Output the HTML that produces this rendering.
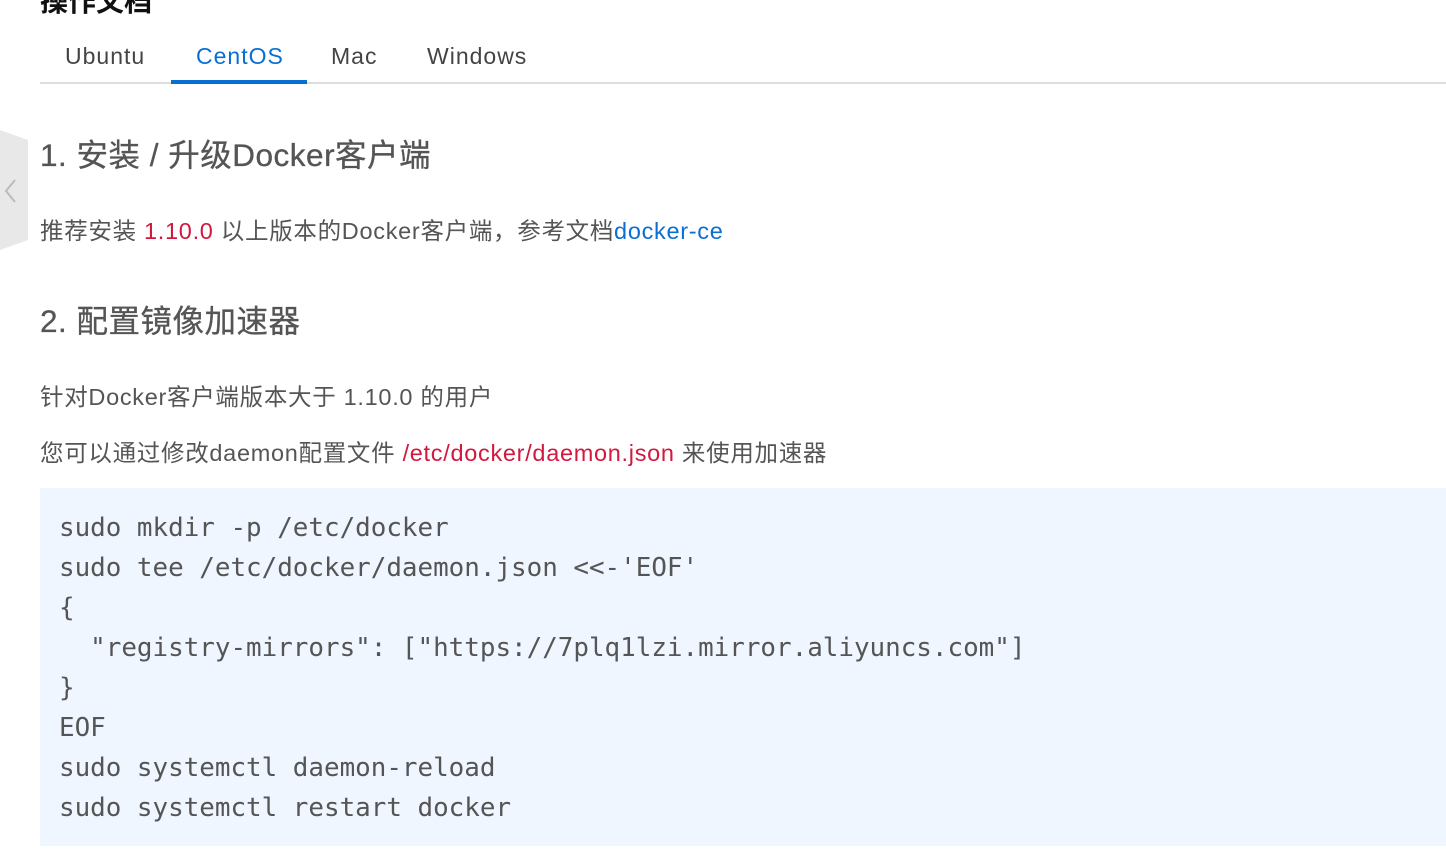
<!DOCTYPE html><html><head><meta charset="utf-8"><style>
body{margin:0;width:1446px;height:864px;overflow:hidden;background:#fff;font-family:"Liberation Sans","Noto Sans CJK SC",sans-serif;color:#555;position:relative}
.a{position:absolute;white-space:nowrap}
.tab{font-size:23px;color:#444;top:41px;line-height:30px;letter-spacing:1px}
.h{font-size:31.5px;color:#555;line-height:40px;-webkit-text-stroke:0.3px #555;letter-spacing:0.5px}
.p{font-size:23.5px;line-height:30px;color:#555;letter-spacing:0.7px}
.r{color:#d2183e}.b{color:#0a6fd1}
pre{position:absolute;left:40px;top:488px;width:1406px;height:358px;margin:0;background:#f0f6ff;box-sizing:border-box;padding:20px 0 0 19px;font-family:"DejaVu Sans Mono",monospace;font-size:25.9px;line-height:40px;color:#555}
</style></head><body>
<div class="a" style="left:40px;top:-20px;font-size:28px;font-weight:bold;color:#111">操作文档</div>
<div class="a tab" style="left:65px">Ubuntu</div>
<div class="a tab" style="left:196px;color:#0a6fd1">CentOS</div>
<div class="a tab" style="left:331px">Mac</div>
<div class="a tab" style="left:427px">Windows</div>
<div class="a" style="left:40px;top:82px;width:1406px;height:2px;background:#ddd"></div>
<div class="a" style="left:171px;top:80px;width:136px;height:4px;background:#0a6fd1"></div>
<svg class="a" style="left:0;top:130px" width="28" height="120"><polygon points="0,0 28,10 28,110 0,120" fill="#e8e8e8"/><path d="M15 50 L6 61 L15 72" stroke="#bbb" stroke-width="2" fill="none"/></svg>
<div class="a h" style="left:40px;top:135px">1. 安装 / 升级Docker客户端</div>
<div class="a p" style="left:40px;top:216px">推荐安装 <span class="r">1.10.0</span> 以上版本的Docker客户端，参考文档<span class="b">docker-ce</span></div>
<div class="a h" style="left:40px;top:301px">2. 配置镜像加速器</div>
<div class="a p" style="left:40px;top:382px">针对Docker客户端版本大于 1.10.0 的用户</div>
<div class="a p" style="left:40px;top:438px">您可以通过修改daemon配置文件 <span class="r">/etc/docker/daemon.json</span> 来使用加速器</div>
<pre>sudo mkdir -p /etc/docker
sudo tee /etc/docker/daemon.json &lt;&lt;-'EOF'
{
  "registry-mirrors": ["https://7plq1lzi.mirror.aliyuncs.com"]
}
EOF
sudo systemctl daemon-reload
sudo systemctl restart docker</pre>
</body></html>
